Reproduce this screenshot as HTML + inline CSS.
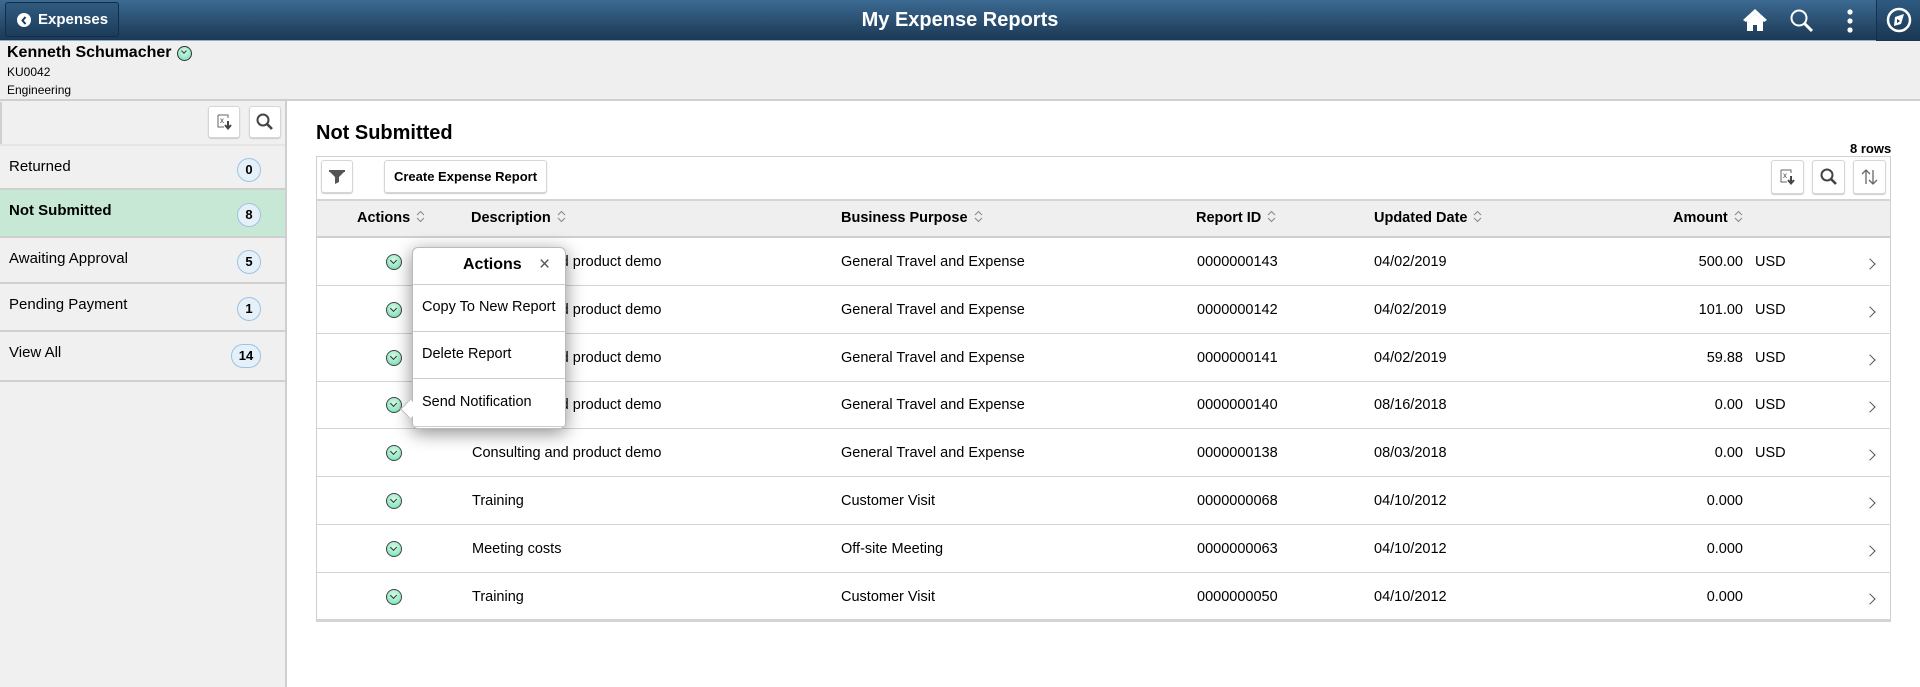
<!DOCTYPE html>
<html><head><meta charset="utf-8"><style>
*{box-sizing:border-box;margin:0;padding:0}
body{width:1920px;height:687px;overflow:hidden;font-family:"Liberation Sans",Arial,sans-serif;color:#000;background:#fff;position:relative}
.abs{position:absolute}
#hdr{left:0;top:0;width:1920px;height:41px;background:linear-gradient(#3b6a92,#1c3854);border-bottom:1px solid #8fb0cc}
#back{left:5px;top:2px;width:114px;height:35px;border:1px solid #142d45;border-radius:3px;background:linear-gradient(#2f5b80,#1d3c5a);color:#fff;font-weight:bold;font-size:15px;line-height:33px;padding-left:32px}
#back .c{position:absolute;left:11px;top:10px;width:14px;height:14px;border-radius:50%;background:#fff}
#title{left:0;width:1920px;top:0;line-height:41px;text-align:center;color:#fff;font-weight:bold;font-size:20px}
#info{left:0;top:41px;width:1920px;height:60px;background:#efefef;border-bottom:2px solid #cfcfcf}
#side{left:0;top:101px;width:287px;height:586px;background:#f0f0f0;border-right:2px solid #cfcfcf}
.srow{position:absolute;left:0;width:285px;border-bottom:2px solid #cfcfcf;font-size:15px;padding:12px 0 0 9px}
.badge{position:absolute;right:24px;width:24px;height:24px;border-radius:50%;border:1px solid #9cc3e0;background:#e6f0f8;font-size:13px;font-weight:bold;text-align:center;line-height:22px}
.btn{position:absolute;background:#fff;border:1px solid #d6d6d6;border-radius:3px;box-shadow:0 1px 1px #ccc}
.cell{position:absolute;font-size:14.5px;white-space:nowrap}
.hd{font-weight:bold}
.si{display:inline-block;width:9px;height:13px;margin-left:6px;vertical-align:-1px}
.act{position:absolute;left:386px;width:16px;height:16px;border-radius:50%;border:1.5px solid #444;background:radial-gradient(circle at 50% 35%,#d8fbe9,#6fdcb0)}
.act:after{content:"";position:absolute;left:4px;top:3px;width:4px;height:4px;border-right:1.5px solid #333;border-bottom:1.5px solid #333;transform:rotate(45deg)}
.chev{position:absolute;left:1866px;width:8px;height:8px;border-right:1.5px solid #555;border-top:1.5px solid #555;transform:rotate(45deg)}
.rl{position:absolute;left:317px;width:1573px;height:1px;background:#d4d4d4}
</style></head><body>
<div id="hdr" class="abs"></div>
<div id="title" class="abs">My Expense Reports</div>
<div id="back" class="abs"><span class="c"></span><svg class="abs" style="left:14px;top:13px" width="8" height="9" viewBox="0 0 8 9"><path d="M5.5 1 L2.5 4.5 L5.5 8" stroke="#1d3c5a" stroke-width="2" fill="none"/></svg>Expenses</div>
<svg class="abs" style="left:1742px;top:8px" width="26" height="24" viewBox="0 0 26 24"><path d="M13 1 L1 12 L4 14 L13 6 L22 14 L25 12 Z" fill="#fff"/><path d="M5 13 L13 6 L21 13 V23 H15 V17 H11 V23 H5 Z" fill="#fff"/></svg>
<svg class="abs" style="left:1789px;top:8px" width="25" height="25" viewBox="0 0 25 25"><circle cx="10" cy="10" r="7.5" stroke="#fff" stroke-width="2" fill="none"/><path d="M15.5 15.5 L23 23" stroke="#fff" stroke-width="3"/></svg>
<svg class="abs" style="left:1846px;top:8px" width="8" height="26" viewBox="0 0 8 26"><circle cx="4" cy="4" r="2.6" fill="#fff"/><circle cx="4" cy="13" r="2.6" fill="#fff"/><circle cx="4" cy="22" r="2.6" fill="#fff"/></svg>
<div class="abs" style="left:1876px;top:0;width:44px;height:41px;background:linear-gradient(#2e5a80,#1a3652);border-left:1px solid #15304a"></div>
<svg class="abs" style="left:1886px;top:7px" width="26" height="26" viewBox="0 0 26 26"><circle cx="13" cy="13" r="11" stroke="#fff" stroke-width="2.5" fill="none"/><path d="M9 10 L18 7 L15 17 L8 19 Z" fill="#fff"/><path d="M11 12 L14 14 L11 16 Z" fill="#1d3c5a"/></svg>

<div id="info" class="abs"></div>
<div class="abs" style="left:7px;top:44px;font-size:16px;font-weight:bold">Kenneth Schumacher</div>
<div class="abs" style="left:177px;top:46px;width:15px;height:15px;border-radius:50%;border:1.5px solid #333;background:radial-gradient(circle at 50% 35%,#d8fbe9,#6fdcb0)"><div style="position:absolute;left:3.5px;top:2px;width:4px;height:4px;border-right:1.5px solid #333;border-bottom:1.5px solid #333;transform:rotate(45deg)"></div></div>
<div class="abs" style="left:7px;top:65px;font-size:12px">KU0042</div>
<div class="abs" style="left:7px;top:83px;font-size:12px">Engineering</div>

<div id="side" class="abs"></div>
<div class="abs" style="left:0;top:102px;width:2px;height:42px;background:#cfcfcf"></div>
<div class="btn" style="left:208px;top:106px;width:32px;height:32px"><svg width="30" height="30" viewBox="0 0 30 30"><path d="M9 8 H19 V11 M9 8 V20 H15" stroke="#666" fill="none"/><text x="11" y="16" font-size="8" font-family="Liberation Sans" fill="#444">x</text><path d="M19 14 V21 M16 18 L19 21.5 L22 18" stroke="#444" stroke-width="2" fill="none"/></svg></div>
<div class="btn" style="left:249px;top:106px;width:32px;height:32px"><svg width="30" height="30" viewBox="0 0 30 30"><circle cx="13" cy="13" r="5.5" stroke="#444" stroke-width="2" fill="none"/><path d="M17 17 L22 22" stroke="#444" stroke-width="2.6"/></svg></div>
<div class="srow" style="top:144px;height:46px;border-top:2px solid #e5e5e5">Returned<span class="badge" style="top:12px">0</span></div>
<div class="srow" style="top:190px;height:48px;background:#c8e8d6;font-weight:bold">Not Submitted<span class="badge" style="top:13px">8</span></div>
<div class="srow" style="top:238px;height:46px">Awaiting Approval<span class="badge" style="top:12px">5</span></div>
<div class="srow" style="top:284px;height:48px">Pending Payment<span class="badge" style="top:13px">1</span></div>
<div class="srow" style="top:332px;height:50px">View All<span class="badge" style="top:12px;width:30px;border-radius:15px">14</span></div>

<div class="abs" style="left:316px;top:122px;font-size:20px;font-weight:bold">Not Submitted</div>
<div class="abs" style="left:1850px;top:141px;font-size:13px;font-weight:bold">8 rows</div>
<div class="abs" style="left:316px;top:156px;width:1575px;height:466px;border:1px solid #cfcfcf;border-bottom:3px solid #d4d4d4"></div>
<div class="btn" style="left:321px;top:160px;width:32px;height:33px"><svg width="30" height="31" viewBox="0 0 30 31"><path d="M7 10 H23 L17 16 V21 L13 23 V16 Z" fill="#555"/><rect x="7" y="9" width="16" height="2" fill="#555"/></svg></div>
<div class="btn" style="left:384px;top:160px;width:163px;height:33px;font-size:13px;font-weight:bold;text-align:center;line-height:31px">Create Expense Report</div>
<div class="btn" style="left:1771px;top:160px;width:33px;height:34px"><svg width="31" height="32" viewBox="0 0 31 32"><path d="M9 9 H19 V12 M9 9 V21 H15" stroke="#666" fill="none"/><text x="11" y="17" font-size="8" font-family="Liberation Sans" fill="#444">x</text><path d="M19 15 V22 M16 19 L19 22.5 L22 19" stroke="#444" stroke-width="2" fill="none"/></svg></div>
<div class="btn" style="left:1812px;top:160px;width:33px;height:34px"><svg width="31" height="32" viewBox="0 0 31 32"><circle cx="14" cy="14" r="5.5" stroke="#444" stroke-width="2" fill="none"/><path d="M18 18 L23 23" stroke="#444" stroke-width="2.6"/></svg></div>
<div class="btn" style="left:1853px;top:160px;width:33px;height:34px"><svg width="31" height="32" viewBox="0 0 31 32"><path d="M12 23 V9 M8 13 L12 9 L16 13 M19 9 V23 M15 19 L19 23 L23 19" stroke="#666" stroke-width="1.3" fill="none"/></svg></div>

<div class="abs" style="left:317px;top:199px;width:1573px;height:39px;background:#efefef;border-top:2px solid #d4d4d4;border-bottom:2px solid #cfcfcf"></div>
<div id="tbl"></div>
<script>
var s='<svg class="si" viewBox="0 0 9 13"><path d="M1 5 L4.5 1.5 L8 5 M1 8 L4.5 11.5 L8 8" stroke="#888" fill="none"/></svg>';
var h='';
[['Actions',357],['Description',471],['Business Purpose',841],['Report ID',1196],['Updated Date',1374],['Amount',1673]].forEach(function(c){h+='<div class="cell hd" style="left:'+c[1]+'px;top:210px">'+c[0]+s+'</div>';});
var rows=[['Consulting and product demo','General Travel and Expense','0000000143','04/02/2019','500.00','USD'],
['Consulting and product demo','General Travel and Expense','0000000142','04/02/2019','101.00','USD'],
['Consulting and product demo','General Travel and Expense','0000000141','04/02/2019','59.88','USD'],
['Consulting and product demo','General Travel and Expense','0000000140','08/16/2018','0.00','USD'],
['Consulting and product demo','General Travel and Expense','0000000138','08/03/2018','0.00','USD'],
['Training','Customer Visit','0000000068','04/10/2012','0.000',''],
['Meeting costs','Off-site Meeting','0000000063','04/10/2012','0.000',''],
['Training','Customer Visit','0000000050','04/10/2012','0.000','']];
rows.forEach(function(r,i){var t=238+i*47.8;var ty=t+16;
h+='<div class="act" style="top:'+(t+16)+'px"></div>';
h+='<div class="cell" style="left:472px;top:'+ty+'px">'+r[0]+'</div>';
h+='<div class="cell" style="left:841px;top:'+ty+'px">'+r[1]+'</div>';
h+='<div class="cell" style="left:1197px;top:'+ty+'px">'+r[2]+'</div>';
h+='<div class="cell" style="left:1374px;top:'+ty+'px">'+r[3]+'</div>';
h+='<div class="cell" style="right:'+(1920-1743)+'px;top:'+ty+'px">'+r[4]+'</div>';
h+='<div class="cell" style="left:1755px;top:'+ty+'px">'+r[5]+'</div>';
h+='<div class="chev" style="top:'+(t+22)+'px"></div>';
if(i<7)h+='<div class="rl" style="top:'+(t+47)+'px"></div>';});
document.getElementById('tbl').innerHTML=h;
</script>
<div class="abs" style="left:412px;top:247px;width:154px;height:182px;background:#fff;border:1px solid #bbb;border-radius:6px;box-shadow:0 4px 18px rgba(0,0,0,.45)"></div>
<div class="abs" style="left:403px;top:402px;width:14px;height:14px;background:#fff;transform:rotate(45deg);border-left:1px solid #bbb;border-bottom:1px solid #bbb"></div>
<div class="abs" style="left:413px;top:248px;width:152px;height:180px;background:#fff;border-radius:6px"></div>
<div class="abs" style="left:463px;top:256px;font-size:16px;font-weight:bold">Actions</div>
<div class="abs" style="left:539px;top:254px;font-size:19px;color:#555">×</div>
<div class="abs" style="left:413px;top:284px;width:152px;height:1px;background:#ccc"></div>
<div class="abs" style="left:422px;top:299px;font-size:14.5px">Copy To New Report</div>
<div class="abs" style="left:413px;top:331px;width:152px;height:1px;background:#ccc"></div>
<div class="abs" style="left:422px;top:346px;font-size:14.5px">Delete Report</div>
<div class="abs" style="left:413px;top:378px;width:152px;height:1px;background:#ccc"></div>
<div class="abs" style="left:422px;top:394px;font-size:14.5px">Send Notification</div>
<div class="abs" style="left:413px;top:426px;width:152px;height:1px;background:#ccc"></div>
</body></html>
